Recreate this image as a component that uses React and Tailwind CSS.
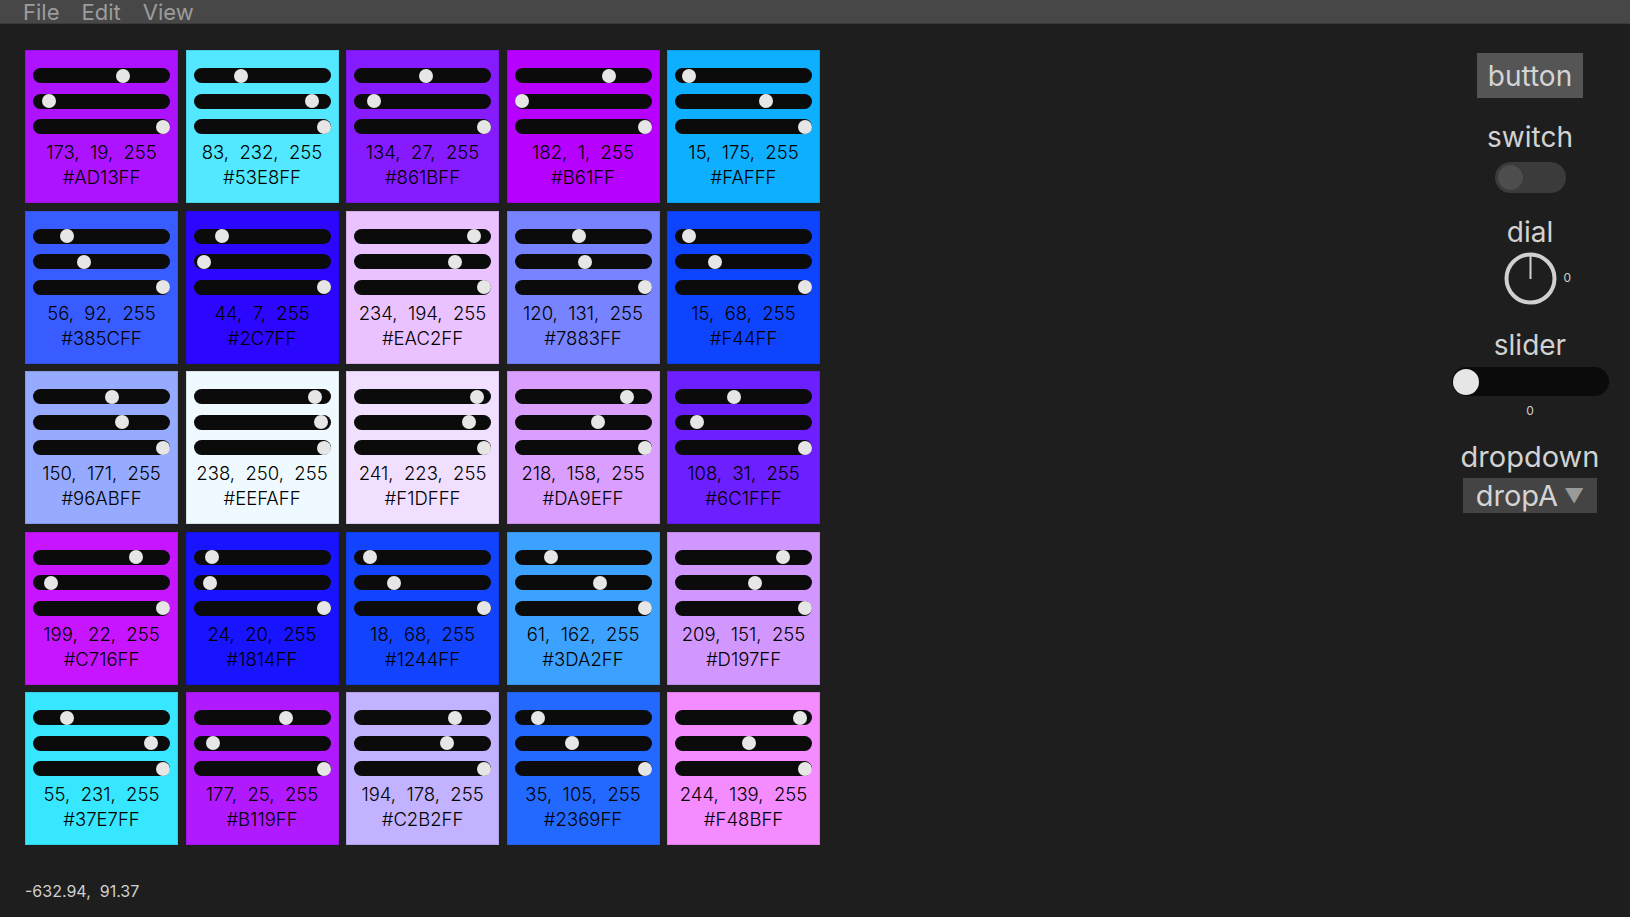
import React from 'react';

const swatches = [
  [173, 19, 255, 'AD13FF'],
  [83, 232, 255, '53E8FF'],
  [134, 27, 255, '861BFF'],
  [182, 1, 255, 'B61FF'],
  [15, 175, 255, 'FAFFF'],
  [56, 92, 255, '385CFF'],
  [44, 7, 255, '2C7FF'],
  [234, 194, 255, 'EAC2FF'],
  [120, 131, 255, '7883FF'],
  [15, 68, 255, 'F44FF'],
  [150, 171, 255, '96ABFF'],
  [238, 250, 255, 'EEFAFF'],
  [241, 223, 255, 'F1DFFF'],
  [218, 158, 255, 'DA9EFF'],
  [108, 31, 255, '6C1FFF'],
  [199, 22, 255, 'C716FF'],
  [24, 20, 255, '1814FF'],
  [18, 68, 255, '1244FF'],
  [61, 162, 255, '3DA2FF'],
  [209, 151, 255, 'D197FF'],
  [55, 231, 255, '37E7FF'],
  [177, 25, 255, 'B119FF'],
  [194, 178, 255, 'C2B2FF'],
  [35, 105, 255, '2369FF'],
  [244, 139, 255, 'F48BFF'],
];

function MiniSlider({ value }) {
  // thumb travels along the track, 14px thumb inside a 137px track
  const left = (value / 255) * (137 - 14);
  return (
    <div className="relative h-[15px] w-[137px] rounded-full bg-[#0b0b0b]">
      <div
        className="absolute top-[0.5px] h-[14px] w-[14px] rounded-full bg-[#e6e6e6]"
        style={{ left: left }}
      />
    </div>
  );
}

function Swatch({ r, g, b, hex }) {
  return (
    <div
      className="flex h-[153px] w-[153px] flex-col items-center border border-black/10 pt-[17px]"
      style={{ backgroundColor: `rgb(${r}, ${g}, ${b})` }}
    >
      <div className="flex flex-col gap-[10.5px]">
        <MiniSlider value={r} />
        <MiniSlider value={g} />
        <MiniSlider value={b} />
      </div>
      <div className="mt-[6px] whitespace-pre text-center text-[18.5px] leading-[25px] font-light text-black">
        {`${r},  ${g},  ${b}`}
      </div>
      <div className="text-center text-[18.5px] leading-[25px] font-light text-black">#{hex}</div>
    </div>
  );
}

function Dial() {
  return (
    <div className="relative mt-[4px] h-[53px] w-[53px]">
      <svg width="53" height="53" viewBox="0 0 53 53">
        <circle cx="26.5" cy="26.5" r="24" fill="none" stroke="#d0d0d0" strokeWidth="4" />
        <line x1="26.5" y1="1" x2="26.5" y2="27" stroke="#d0d0d0" strokeWidth="2" />
      </svg>
      <span className="absolute left-[60px] top-[19px] text-[12px] leading-[14px] text-[#cfcfcf]">0</span>
    </div>
  );
}

function SidePanel() {
  return (
    <div className="mr-[20px] flex w-[160px] flex-col items-center pt-[29px] text-[#d2d2d2]">
      <button className="h-[45px] w-[106px] bg-[#555555] text-[28px] leading-[32px] text-[#d4d4d4]">
        button
      </button>
      <div className="mt-[23px] text-[28px] leading-[32px]">switch</div>
      <div className="mt-[9px] flex h-[31px] w-[71px] items-center rounded-full bg-[#3b3b3b] px-[3px]">
        <div className="h-[25px] w-[25px] rounded-full bg-[#4d4d4d]" />
      </div>
      <div className="mt-[23px] text-[28px] leading-[32px]">dial</div>
      <Dial />
      <div className="mt-[24px] text-[28px] leading-[32px]">slider</div>
      <div className="mt-[6px] flex h-[29px] w-[157px] items-center rounded-full bg-[#0b0b0b] px-[1px]">
        <div className="h-[26px] w-[26px] rounded-full bg-[#e6e6e6]" />
      </div>
      <div className="mt-[7px] text-[12px] leading-[16px] text-[#cfcfcf]">0</div>
      <div className="mt-[22px] text-[29px] leading-[32px]">dropdown</div>
      <div className="mt-[5px] flex h-[35px] w-[134px] items-center justify-center gap-[6px] bg-[#444444]">
        <span className="text-[29px] leading-[32px] text-[#d4d4d4]">dropA</span>
        <span className="text-[20px] leading-[20px] text-[#9a9a9a]">▼</span>
      </div>
    </div>
  );
}

export default function App() {
  return (
    <div className="flex h-[917px] w-full flex-col overflow-hidden bg-[#1e1e1e] font-['Inter',sans-serif]">
      <div className="flex h-[24px] shrink-0 items-center gap-[22px] border-b border-[#3a3a3a] bg-[#474747] pl-[23px] text-[22px] leading-[24px] text-[#9c9c9c]">
        <span>File</span>
        <span>Edit</span>
        <span>View</span>
      </div>
      <div className="flex flex-1">
        <div className="flex flex-col pl-[25px] pt-[26px]">
          <div className="grid grid-cols-[repeat(5,153px)] gap-[7.5px]">
            {swatches.map(([r, g, b, hex], i) => (
              <Swatch key={i} r={r} g={g} b={b} hex={hex} />
            ))}
          </div>
          <div className="mt-[36px] whitespace-pre text-[16px] leading-[20px] text-[#cfcfcf]">-632.94,  91.37</div>
        </div>
        <div className="flex-1" />
        <SidePanel />
      </div>
    </div>
  );
}
